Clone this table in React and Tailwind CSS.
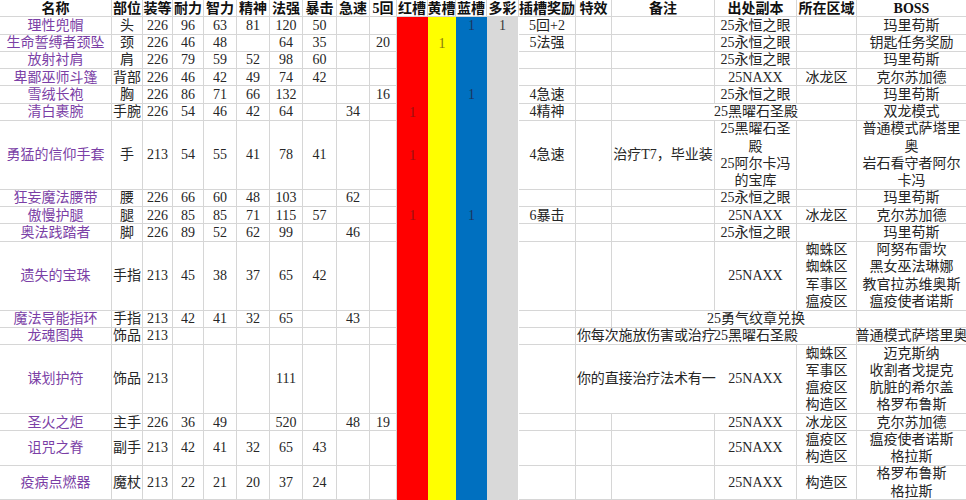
import React from 'react';

// column widths, left to right
const W = [
  'w-[112px]', 'w-[31px]', 'w-[30px]', 'w-[31px]', 'w-[33px]', 'w-[33px]', 'w-[33px]',
  'w-[34px]', 'w-[33px]', 'w-[27px]', 'w-[31px]', 'w-[28px]', 'w-[31px]', 'w-[32px]',
  'w-[57px]', 'w-[36px]', 'w-[103px]', 'w-[82px]', 'w-[60px]', 'w-[109px]',
];

const HEAD = [
  '名称', '部位', '装等', '耐力', '智力', '精神', '法强', '暴击', '急速', '5回',
  '红槽', '黄槽', '蓝槽', '多彩', '插槽奖励', '特效', '备注', '出处副本', '所在区域', 'BOSS',
];

const H = { 1: 'h-[17.25px]', 2: 'h-[34.5px]', 4: 'h-[69px]' };

const GEM = [
  'bg-[#ff0000] text-[#9a1212]',
  'bg-[#ffff00] text-[#8a7a10]',
  'bg-[#0070c0] text-[#1c355e]',
  'bg-[#d9d9d9] text-[#3a3a3a]',
];

const rows = [
  { n: '理性兜帽', v: ['头', '226', '96', '63', '81', '120', '50', '', ''], g: ['', '', '1', '1'], bonus: '5回+2', src: '25永恒之眼', boss: '玛里苟斯' },
  { n: '生命誓缚者颈坠', v: ['颈', '226', '46', '48', '', '64', '35', '', '20'], g: ['', '1', '', ''], bonus: '5法强', src: '25永恒之眼', boss: '钥匙任务奖励' },
  { n: '放射衬肩', v: ['肩', '226', '79', '59', '52', '98', '60', '', ''], src: '25永恒之眼', boss: '玛里苟斯' },
  { n: '卑鄙巫师斗篷', v: ['背部', '226', '46', '42', '49', '74', '42', '', ''], src: '25NAXX', zone: '冰龙区', boss: '克尔苏加德' },
  { n: '雪绒长袍', v: ['胸', '226', '86', '71', '66', '132', '', '', '16'], g: ['', '', '1', ''], bonus: '4急速', src: '25永恒之眼', boss: '玛里苟斯' },
  { n: '清白裹腕', v: ['手腕', '226', '54', '46', '42', '64', '', '34', ''], g: ['1', '', '', ''], bonus: '4精神', src: '25黑曜石圣殿', open: true, boss: '双龙模式' },
  {
    n: '勇猛的信仰手套', h: 4, v: ['手', '213', '54', '55', '41', '78', '41', '', ''], g: ['1', '', '', ''], bonus: '4急速',
    note: '治疗T7，毕业装', src: ['25黑曜石圣', '殿', '25阿尔卡冯', '的宝库'], boss: ['普通模式萨塔里', '奥', '岩石看守者阿尔', '卡冯'],
  },
  { n: '狂妄魔法腰带', v: ['腰', '226', '66', '60', '48', '103', '', '62', ''], src: '25永恒之眼', boss: '玛里苟斯' },
  { n: '傲慢护腿', v: ['腿', '226', '85', '85', '71', '115', '57', '', ''], g: ['1', '', '1', ''], bonus: '6暴击', src: '25NAXX', zone: '冰龙区', boss: '克尔苏加德' },
  { n: '奥法践踏者', v: ['脚', '226', '89', '52', '62', '99', '', '46', ''], src: '25永恒之眼', boss: '玛里苟斯' },
  {
    n: '遗失的宝珠', h: 4, v: ['手指', '213', '45', '38', '37', '65', '42', '', ''], src: '25NAXX',
    zone: ['蜘蛛区', '蜘蛛区', '军事区', '瘟疫区'], boss: ['阿努布雷坎', '黑女巫法琳娜', '教官拉苏维奥斯', '瘟疫使者诺斯'],
  },
  { n: '魔法导能指环', v: ['手指', '213', '42', '41', '32', '65', '', '43', ''], src: '25勇气纹章兑换', open: true },
  { n: '龙魂图典', v: ['饰品', '213', '', '', '', '', '', '', ''], fx: '你每次施放伤害或治疗', src: '25黑曜石圣殿', open: true, boss: '普通模式萨塔里奥' },
  {
    n: '谋划护符', h: 4, v: ['饰品', '213', '', '', '', '111', '', '', ''], fx: '你的直接治疗法术有一', src: '25NAXX',
    zone: ['蜘蛛区', '军事区', '瘟疫区', '构造区'], boss: ['迈克斯纳', '收割者戈提克', '肮脏的希尔盖', '格罗布鲁斯'],
  },
  { n: '圣火之炬', v: ['主手', '226', '36', '49', '', '520', '', '48', '19'], src: '25NAXX', zone: '冰龙区', boss: '克尔苏加德' },
  { n: '诅咒之脊', h: 2, v: ['副手', '213', '42', '41', '32', '65', '43', '', ''], src: '25NAXX', zone: ['瘟疫区', '构造区'], boss: ['瘟疫使者诺斯', '格拉斯'] },
  { n: '疫病点燃器', h: 2, v: ['魔杖', '213', '22', '21', '20', '37', '24', '', ''], src: '25NAXX', zone: '构造区', boss: ['格罗布鲁斯', '格拉斯'] },
];

const line = 'border-[#d6d6d6]';

const Cell = ({ w, children, border = 'border-r border-b', extra = '' }) => {
  const lines = Array.isArray(children) ? children : [children];
  return (
    <div className={`${w} shrink-0 ${border} ${line} flex flex-col items-center justify-center ${extra}`}>
      {lines.map((t, i) => (
        <div key={i} className="whitespace-nowrap">{t}</div>
      ))}
    </div>
  );
};

const Row = ({ r }) => {
  const g = r.g || ['', '', '', ''];
  return (
    <div className={`flex ${H[r.h || 1]}`}>
      <Cell w={W[0]} extra="text-[#7b3fa6]">{r.n}</Cell>
      {r.v.map((t, i) => (
        <Cell key={i} w={W[i + 1]}>{t}</Cell>
      ))}
      {g.map((t, i) => (
        <div key={i} className={`${W[i + 10]} shrink-0 flex items-center justify-center ${GEM[i]} ${i === 3 ? 'border-r border-white' : ''}`}>
          {t}
        </div>
      ))}
      <Cell w={W[14]}>{r.bonus || ''}</Cell>
      {r.fx ? (
        <div className={`w-[139px] shrink-0 border-b ${line} flex items-center pl-[1px]`}>
          <span className="whitespace-nowrap tracking-[-0.15px]">{r.fx}</span>
        </div>
      ) : (
        <>
          <Cell w={W[15]}>{''}</Cell>
          <Cell w={W[16]} border={r.open ? 'border-b' : 'border-r border-b'}>{r.note || ''}</Cell>
        </>
      )}
      <Cell w={W[17]} border={r.open ? 'border-b' : 'border-r border-b'}>{r.src}</Cell>
      <Cell w={W[18]}>{r.zone || ''}</Cell>
      <Cell w={W[19]} border="border-b">{r.boss || ''}</Cell>
    </div>
  );
};

export default function App() {
  return (
    <div className="w-[966px] h-[500px] overflow-hidden bg-white text-[#262626] text-[14px] leading-[17.25px] font-['Liberation_Serif','Noto_Sans_CJK_SC',serif]">
      <div className="flex h-[17.25px] font-bold text-[#111]">
        {HEAD.map((t, i) => (
          <Cell key={i} w={W[i]} border={i === 19 ? 'border-b' : 'border-r border-b'}>{t}</Cell>
        ))}
      </div>
      {rows.map((r, i) => (
        <Row key={i} r={r} />
      ))}
    </div>
  );
}
